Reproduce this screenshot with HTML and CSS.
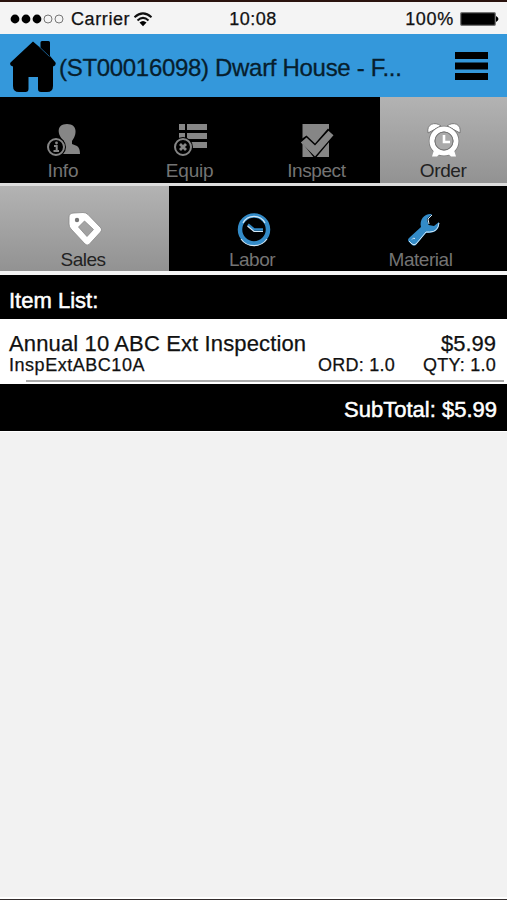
FILE: index.html
```html
<!DOCTYPE html>
<html lang="en">
<head>
<meta charset="utf-8">
<title>Order</title>
<link rel="stylesheet" href="styles.css">
</head>
<body>
<div class="status">
  <div class="carrier">
    <svg width="54" height="12" viewBox="0 0 54 12"><g fill="#000"><circle cx="5" cy="6" r="4.400"/><circle cx="16" cy="6" r="4.400"/><circle cx="27" cy="6" r="4.400"/></g><g fill="none" stroke="#777"><circle cx="38" cy="6" r="4"/><circle cx="49" cy="6" r="4"/></g></svg>
    <span class="carrier-name">Carrier</span>
    <svg width="20" height="15" viewBox="0 0 20 15"><g fill="none" stroke="#111" stroke-width="2"><path d="M1.500 5.200Q10-2.400 18.500 5.200"/><path d="M4.500 8.500Q10 3.300 15.500 8.500"/></g><path d="M6.500 10.500Q10 7.500 13.500 10.500L10 14.200z"/></svg>
  </div>
  <span class="clock">10:08</span>
  <div class="battery">
    <span class="percent">100%</span>
    <svg width="39" height="16" viewBox="0 0 39 16"><rect x=".7" y="1.700" width="34.600" height="12.600" rx="1" fill="#000" stroke="#777" stroke-width="1.200"/><path d="M36 5q5 3 0 6z"/></svg>
  </div>
</div>
<header class="header">
  <svg class="home" width="46" height="54" viewBox="0 0 46 54"><path d="M23 1.500L30.500 8V2.500q0-1.500 1.500-1.500h6.500q1.500 0 1.500 1.500V16l5.500 6.500q1 3-2.500 4V46q0 6-6 6h-6q-3 0-3-3V37H18.500V49q0 3-3 3H9q-6 0-6-6V26.500q-4-1-2.500-4z" fill="#000"/><path d="M29.500 7l10 9.500" stroke="#17598a" stroke-width="1"/></svg>
  <h1 class="title">(ST00016098) Dwarf House - F...</h1>
  <svg class="menu" width="33" height="30" viewBox="0 0 33 30"><path d="M0 1h33v7H0zM0 11.500h33v7H0zM0 22h33v7H0z"/></svg>
</header>
<nav class="tabs tabs-main">
  <a class="tab"><svg width="36" height="36" viewBox="0 0 36 36"><path d="M22 2c11 0 10 11 5 17v3l5 2q3 2 3 8H16l1-8 2-5C12 13 11 2 22 2z" fill="#868686"/><circle cx="11" cy="25" r="10" fill="#000"/><circle cx="11" cy="25" r="8" fill="none" stroke="#868686" stroke-width="2"/><path d="M9 24h2.700v5M8.500 29h5.500" fill="none" stroke="#868686" stroke-width="2"/><circle cx="11.500" cy="21" r="1.400" fill="#868686"/></svg><span class="label">Info</span></a>
  <a class="tab"><svg width="36" height="36" viewBox="0 0 36 36"><path d="M7 2h6v6H7zM15 2h20v6H15zM7 11h6v6H7zM15 11h20v6H15zM15 20h20v6H15z" fill="#868686"/><circle cx="11" cy="25" r="10" fill="#000"/><circle cx="11" cy="25" r="8" fill="none" stroke="#868686" stroke-width="2"/><path d="M8 22l6 6M14 22l-6 6" stroke="#868686" stroke-width="2.800"/></svg><span class="label">Equip</span></a>
  <a class="tab"><svg width="36" height="36" viewBox="0 0 36 36"><path d="M3.500 2H30v33H3.500z" fill="#868686"/><path d="M1 18l6.500-4.500 8.500 8L29 6.500l7 6.500L16 37z" fill="#000"/><path d="M1.800 20.500L7.500 15.500l8.500 8L29.500 8.700l5 4.600L16 34.500z" fill="#868686"/></svg><span class="label tight">Inspect</span></a>
  <a class="tab active"><svg width="36" height="36" viewBox="0 0 36 36"><g stroke="#777" stroke-width="1" fill="#fff"><path d="M2 11C0 2 9-1 15 4zM34 11C36 2 27-1 21 4z"/></g><circle cx="18" cy="19" r="12" fill="#aaa" stroke="#777" stroke-width="6.500"/><circle cx="18" cy="19" r="12" fill="none" stroke="#fff" stroke-width="5"/><path d="M8 28l-2 6.500h5l4-4M28 28l2 6.500h-5l-4-4" fill="#fff"/><circle cx="18" cy="19" r="9" fill="#aaa" stroke="#777"/><path d="M18 13v7h6" fill="none" stroke="#fff" stroke-width="2.600"/></svg><span class="label tight">Order</span></a>
</nav>
<nav class="tabs tabs-sub">
  <a class="tab active"><svg width="36" height="36" viewBox="0 0 36 36"><path d="M2 6Q2 2 7 2l9-.5q3 0 5 2L34 17q1.500 2-.5 4L22 33.500q-2 1.500-4-.5L4 18q-2-2-2-5zM17.500 10L11.500 16 20 25.500 26.500 18.500z" fill="#fff" fill-rule="evenodd" stroke="#888" stroke-width=".8"/><circle cx="10" cy="9" r="2.200" fill="#777"/></svg><span class="label tighter">Sales</span></a>
  <a class="tab"><svg width="36" height="36" viewBox="0 0 36 36"><circle cx="18" cy="18.500" r="14" fill="#000" stroke="#338bc8" stroke-width="4.500"/><path d="M7 12A12.500 12.500 0 0 1 29 12M5 28A16 16 0 0 0 31 28" fill="none" stroke="#d5e8f5" stroke-width="1.200"/><path d="M12 13.500l6 5h9" fill="none" stroke="#338bc8" stroke-width="2.500"/><path d="M11.500 15l6.500 5.500h9" fill="none" stroke="#d5e8f5" stroke-width="1.200"/></svg><span class="label tighter">Labor</span></a>
  <a class="tab"><svg width="36" height="36" viewBox="0 0 36 36"><path d="M27 3l-5 5 1.500 6 5.500 1 5-4q1 10-10 11h-3L11 34q-2 1.500-4 0l-3-3q-2-2 0-4L16 16C14 8 20 2 27 3z" fill="#338bc8"/><path d="M27 4l-4 4 1 5M34 12q-1 9-9.500 9h-3.500L11 33q-2 1.500-4 0l-3-3" fill="none" stroke="#d5e8f5"/><path d="M7 28.500q1-2 3-1" fill="none" stroke="#d5e8f5"/></svg><span class="label material">Material</span></a>
</nav>
<h2 class="list-head">Item List:</h2>
<section class="item">
  <div class="line main"><span class="item-name">Annual 10 ABC Ext Inspection</span><span class="price">$5.99</span></div>
  <div class="line detail"><span class="sku">InspExtABC10A</span><span class="ord">ORD: 1.0</span><span class="qty">QTY: 1.0</span></div>
</section>
<div class="subtotal">SubTotal: $5.99</div>
<div class="rest"></div>
</body>
</html>
```
FILE: styles.css
```css
* { box-sizing: border-box; }
body {
  margin: 0;
  height: 900px;
  display: flex;
  flex-direction: column;
  background: #f2f2f2;
  border-top: 2px solid #2a130e;
  border-bottom: 1px solid #332d2d;
  font-family: "Liberation Sans", Arial, sans-serif;
  color: #111;
  overflow: hidden;
  white-space: nowrap;
}
svg { display: block; flex: none; }
.status {
  height: 32px;
  flex: none;
  display: grid;
  grid-template-columns: 1fr auto 1fr;
  align-items: center;
  padding: 2px 8px 0 10px;
  background: #f4f4f4;
  font-size: 18px;
  -webkit-text-stroke: .25px #111;
}
.carrier, .battery { display: flex; align-items: center; }
.carrier-name { margin: 0 3px 0 7px; letter-spacing: .6px; }
.clock { letter-spacing: .5px; margin-right: 3px; }
.percent { letter-spacing: .7px; }
.battery { justify-content: flex-end; gap: 6px; }
.header {
  height: 63px;
  flex: none;
  display: flex;
  align-items: center;
  background: #3498db;
  padding: 0 19px 0 10px;
}
.home { margin-top: 3px; }
.title {
  margin: 4px 0 0 3px;
  font-size: 24px;
  font-weight: 400;
  letter-spacing: -.31px;
  color: #071e2d;
  -webkit-text-stroke: .3px #071e2d;
}
.menu { margin-left: auto; }
.tabs { display: grid; flex: none; background: #000; }
.tabs-main { height: 89px; grid-template-columns: repeat(4, 1fr); border-bottom: 3px solid #ddd; }
.tabs-sub { height: 89px; grid-template-columns: repeat(3, 1fr); border-bottom: 4px solid #f4f4f4; }
.tab {
  display: flex;
  flex-direction: column;
  align-items: center;
  padding-top: 25px;
  color: #747474;
  font-size: 19px;
  line-height: 22px;
}
.label { margin-top: 2px; margin-right: 1px; letter-spacing: -.2px; }
.label.tight { letter-spacing: -.4px; }
.label.tighter { letter-spacing: -.5px; margin-right: 3px; }
.label.material { letter-spacing: -.45px; margin-right: 4px; }
.active { background: linear-gradient(#b3b3b3, #929292); color: #222; }
.list-head {
  margin: 0;
  height: 44px;
  flex: none;
  padding: 6px 9px 0;
  background: #000;
  color: #fff;
  font-size: 22px;
  font-weight: 400;
  line-height: 40px;
  -webkit-text-stroke: .5px #fff;
}
.item {
  height: 65px;
  flex: none;
  background: #fff;
  padding: 13px 11px 0 9px;
  position: relative;
  -webkit-text-stroke: .25px #111;
}
.item::after { content: ""; position: absolute; left: 26px; right: 3px; bottom: 2px; height: 2px; background: #aaa; }
.line { display: flex; }
.main { font-size: 22px; line-height: 23px; justify-content: space-between; }
.item-name { letter-spacing: .13px; }
.detail { font-size: 18px; line-height: 20px; }
.sku { letter-spacing: .53px; }
.ord, .qty { letter-spacing: .25px; }
.ord { margin-left: auto; margin-right: 28px; }
.subtotal {
  height: 47px;
  flex: none;
  background: #000;
  color: #fff;
  text-align: right;
  padding: 3px 10px 0;
  font-size: 22px;
  line-height: 46px;
  -webkit-text-stroke: .5px #fff;
}
.rest { flex: 1; border-top: 1px solid #fff; border-bottom: 2px solid #fff; }
```
